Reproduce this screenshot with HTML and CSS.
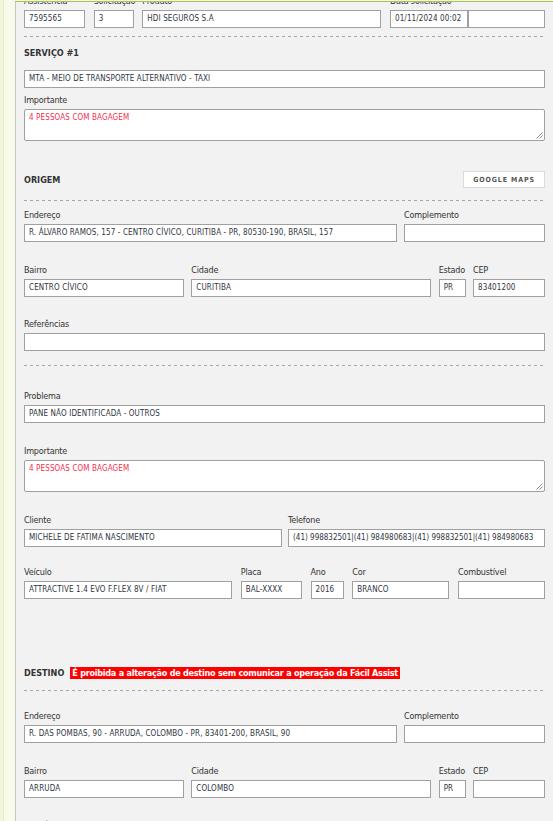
FILE: index.html
```html
<!DOCTYPE html>
<html lang="pt-BR">
<head>
<meta charset="utf-8">
<title>Atendimento</title>
<link rel="stylesheet" href="styles.css">
</head>
<body>
<div class="topline"></div>
<div class="page">
  <aside class="rail"></aside>
  <main class="form">
    <div class="row">
      <div class="grp w61"><div class="lbl">Assistência</div><div class="fld">7595565</div></div>
      <div class="grp w40"><div class="lbl">Solicitação</div><div class="fld">3</div></div>
      <div class="grp w239"><div class="lbl">Produto</div><div class="fld">HDI SEGUROS S.A</div></div>
      <div class="grp w155"><div class="lbl">Data solicitação</div>
        <div class="pair"><div class="fld w78">01/11/2024 00:02</div><div class="fld w77"></div></div>
      </div>
    </div>
    <div class="dash d1"></div>

    <div class="head h-serv">SERVIÇO #1</div>
    <div class="fld m-serv">MTA - MEIO DE TRANSPORTE ALTERNATIVO - TAXI</div>
    <div class="lbl m6">Importante</div>
    <div class="fld ta">4 PESSOAS COM BAGAGEM<span class="grip"><svg width="7" height="7" viewBox="0 0 7 7"><path d="M6.5 0.5 L0.5 6.5 M6.5 3.5 L3.5 6.5" stroke="#8a8a8a" stroke-width="1" fill="none"/></svg></span></div>

    <div class="headrow m30">
      <div class="head">ORIGEM</div>
      <div class="btn">GOOGLE MAPS</div>
    </div>
    <div class="dash m12"></div>

    <div class="row m8">
      <div class="grp w373"><div class="lbl">Endereço</div><div class="fld">R. ÁLVARO RAMOS, 157 - CENTRO CÍVICO, CURITIBA - PR, 80530-190, BRASIL, 157</div></div>
      <div class="grp w141"><div class="lbl">Complemento</div><div class="fld"></div></div>
    </div>
    <div class="row m22">
      <div class="grp w160"><div class="lbl">Bairro</div><div class="fld">CENTRO CÍVICO</div></div>
      <div class="grp w240"><div class="lbl">Cidade</div><div class="fld">CURITIBA</div></div>
      <div class="grp w27"><div class="lbl">Estado</div><div class="fld">PR</div></div>
      <div class="grp w72"><div class="lbl">CEP</div><div class="fld">83401200</div></div>
    </div>
    <div class="lbl m21">Referências</div>
    <div class="fld"></div>
    <div class="dash m14"></div>

    <div class="lbl m24">Problema</div>
    <div class="fld">PANE NÃO IDENTIFICADA - OUTROS</div>
    <div class="lbl m22">Importante</div>
    <div class="fld ta">4 PESSOAS COM BAGAGEM<span class="grip"><svg width="7" height="7" viewBox="0 0 7 7"><path d="M6.5 0.5 L0.5 6.5 M6.5 3.5 L3.5 6.5" stroke="#8a8a8a" stroke-width="1" fill="none"/></svg></span></div>

    <div class="row m22">
      <div class="grp w258"><div class="lbl">Cliente</div><div class="fld">MICHELE DE FATIMA NASCIMENTO</div></div>
      <div class="grp w257"><div class="lbl">Telefone</div><div class="fld tel">(41) 998832501|(41) 984980683|(41) 998832501|(41) 984980683</div></div>
    </div>
    <div class="row m19">
      <div class="grp w208"><div class="lbl">Veículo</div><div class="fld">ATTRACTIVE 1.4 EVO F.FLEX 8V / FIAT</div></div>
      <div class="grp w61"><div class="lbl">Placa</div><div class="fld">BAL-XXXX</div></div>
      <div class="grp w33"><div class="lbl">Ano</div><div class="fld">2016</div></div>
      <div class="grp w97"><div class="lbl">Cor</div><div class="fld">BRANCO</div></div>
      <div class="grp w87"><div class="lbl">Combustível</div><div class="fld"></div></div>
    </div>

    <div class="headrow2 m67">
      <div class="head">DESTINO</div>
      <div class="warn">É proibida a alteração de destino sem comunicar a operação da Fácil Assist</div>
    </div>
    <div class="dash m10"></div>

    <div class="row m19">
      <div class="grp w373"><div class="lbl">Endereço</div><div class="fld">R. DAS POMBAS, 90 - ARRUDA, COLOMBO - PR, 83401-200, BRASIL, 90</div></div>
      <div class="grp w141"><div class="lbl">Complemento</div><div class="fld"></div></div>
    </div>
    <div class="row m22">
      <div class="grp w160"><div class="lbl">Bairro</div><div class="fld">ARRUDA</div></div>
      <div class="grp w240"><div class="lbl">Cidade</div><div class="fld">COLOMBO</div></div>
      <div class="grp w27"><div class="lbl">Estado</div><div class="fld">PR</div></div>
      <div class="grp w72"><div class="lbl">CEP</div><div class="fld"></div></div>
    </div>
    <div class="lbl m21">Referências</div>
    <div class="fld"></div>
  </main>
</div>
</body>
</html>
```
FILE: styles.css
```css
html, body {
  margin: 0;
  padding: 0;
  background: #f2f2f2;
}
body {
  font-family: "DejaVu Sans Condensed", "DejaVu Sans", sans-serif;
  color: #333;
  overflow: hidden;
}
.topline {
  position: fixed;
  top: 0;
  left: 15px;
  right: 0;
  height: 1px;
  background: #f2f2f2;
  border-bottom: 1px solid #a9c744;
  z-index: 5;
}
.page {
  display: flex;
  min-height: 821px;
}
.rail {
  width: 15px;
  flex: none;
  background: linear-gradient(to right, #f3f6dc 0, #f3f6dc 3px, #e6ecc0 3px, #e6ecc0 4px, #f8faea 4px);
  border-right: 1px solid #c6c6c6;
}
.form {
  flex: 1;
  padding: 0 8px;
  margin-top: -5px;
}
.row {
  display: flex;
  justify-content: space-between;
}
.grp { flex: none; }
.pair { display: flex; }
.lbl {
  font-size: 9px;
  line-height: 12px;
  height: 12px;
  margin-bottom: 3px;
  letter-spacing: -0.2px;
  color: #333;
  white-space: nowrap;
}
.fld {
  box-sizing: border-box;
  height: 18px;
  border: 1px solid #a0a0a0;
  background: #fff;
  padding: 0 4px;
  font-size: 8px;
  line-height: 16px;
  letter-spacing: 0.12px;
  color: #2f3640;
  white-space: nowrap;
  overflow: hidden;
}
.tel { letter-spacing: 0; }
.ta {
  position: relative;
  height: 32px;
  border-radius: 2px;
  color: #f0304f;
  line-height: 12px;
  padding-top: 2px;
}
.grip {
  position: absolute;
  right: 1px;
  bottom: 1px;
  width: 7px;
  height: 7px;
  display: block;
}
.grip svg { display: block; }
.dash {
  height: 1px;
  background: repeating-linear-gradient(to right, #a8a8a8 0, #a8a8a8 3px, transparent 3px, transparent 6px);
}
.head {
  font-size: 9px;
  font-weight: bold;
  line-height: 12px;
  color: #333;
  white-space: nowrap;
}
.headrow {
  display: flex;
  justify-content: space-between;
  align-items: center;
  height: 17px;
}
.headrow2 {
  display: flex;
  align-items: center;
  gap: 6px;
  height: 14px;
}
.btn {
  box-sizing: border-box;
  width: 82px;
  height: 17px;
  border: 1px solid #dcdcdc;
  background: #fff;
  font-size: 7px;
  font-weight: bold;
  letter-spacing: 0.9px;
  color: #555;
  display: flex;
  align-items: center;
  justify-content: center;
}
.warn {
  background: #ff0000;
  color: #fff;
  font-size: 9px;
  font-weight: bold;
  line-height: 12px;
  letter-spacing: -0.25px;
  padding: 0 2px;
  white-space: nowrap;
}
.d1 { margin-top: 8px; }
.h-serv { margin-top: 10px; }
.m-serv { margin-top: 11px; }
.m6 { margin-top: 6px; }
.m8 { margin-top: 8px; }
.m10 { margin-top: 10px; }
.m12 { margin-top: 12px; }
.m14 { margin-top: 14px; }
.m19 { margin-top: 19px; }
.m21 { margin-top: 21px; }
.m22 { margin-top: 22px; }
.m24 { margin-top: 24px; }
.m30 { margin-top: 30px; }
.m67 { margin-top: 67px; }
.w27 { width: 27px; }
.w33 { width: 33px; }
.w40 { width: 40px; }
.w61 { width: 61px; }
.w72 { width: 72px; }
.w77 { width: 77px; }
.w78 { width: 78px; }
.w87 { width: 87px; }
.w97 { width: 97px; }
.w141 { width: 141px; }
.w155 { width: 155px; }
.w160 { width: 160px; }
.w208 { width: 208px; }
.w239 { width: 239px; }
.w240 { width: 240px; }
.w257 { width: 257px; }
.w258 { width: 258px; }
.w373 { width: 373px; }
```
